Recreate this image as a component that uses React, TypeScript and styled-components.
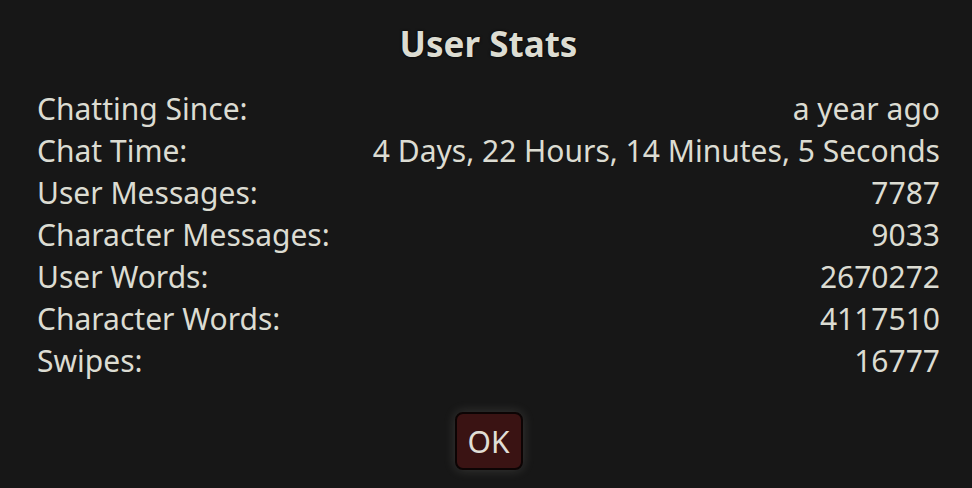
import React from "react";
import styled, { createGlobalStyle } from "styled-components";

const GlobalStyle = createGlobalStyle`
  html, body {
    margin: 0;
    padding: 0;
    background: #171717;
  }
  body {
    font-family: "Noto Sans", "Open Sans", sans-serif;
    color: #dcdcd2;
  }
`;

const Popup = styled.div`
  width: 972px;
  height: 488px;
  box-sizing: border-box;
  padding: 22px 32px 0 37px;
  display: flex;
  flex-direction: column;
  align-items: stretch;
`;

const Title = styled.h3`
  margin: 0 0 22px;
  text-align: center;
  font-size: 35px;
  font-weight: 700;
  line-height: 44px;
  text-shadow: 0 0 3px #000;
`;

const StatList = styled.div`
  display: flex;
  flex-direction: column;
`;

const Row = styled.div`
  display: flex;
  justify-content: space-between;
  font-size: 30px;
  line-height: 42px;
`;

const Footer = styled.div`
  display: flex;
  justify-content: center;
  margin-top: 30px;
`;

const OkButton = styled.button`
  font-family: "Noto Sans", "Open Sans", sans-serif;
  font-size: 30px;
  color: #e0ded6;
  background: #3a1313;
  border: 2px solid #0c0404;
  border-radius: 8px;
  padding: 0 11px;
  height: 58px;
  box-shadow: 0 0 12px rgba(210, 210, 200, 0.18);
`;

const stats: [string, string][] = [
  ["Chatting Since:", "a year ago"],
  ["Chat Time:", "4 Days, 22 Hours, 14 Minutes, 5 Seconds"],
  ["User Messages:", "7787"],
  ["Character Messages:", "9033"],
  ["User Words:", "2670272"],
  ["Character Words:", "4117510"],
  ["Swipes:", "16777"],
];

export default function App() {
  return (
    <>
      <GlobalStyle />
      <Popup>
        <Title>User Stats</Title>
        <StatList>
          {stats.map(([label, value]) => (
            <Row key={label}>
              <span>{label}</span>
              <span>{value}</span>
            </Row>
          ))}
        </StatList>
        <Footer>
          <OkButton>OK</OkButton>
        </Footer>
      </Popup>
    </>
  );
}
